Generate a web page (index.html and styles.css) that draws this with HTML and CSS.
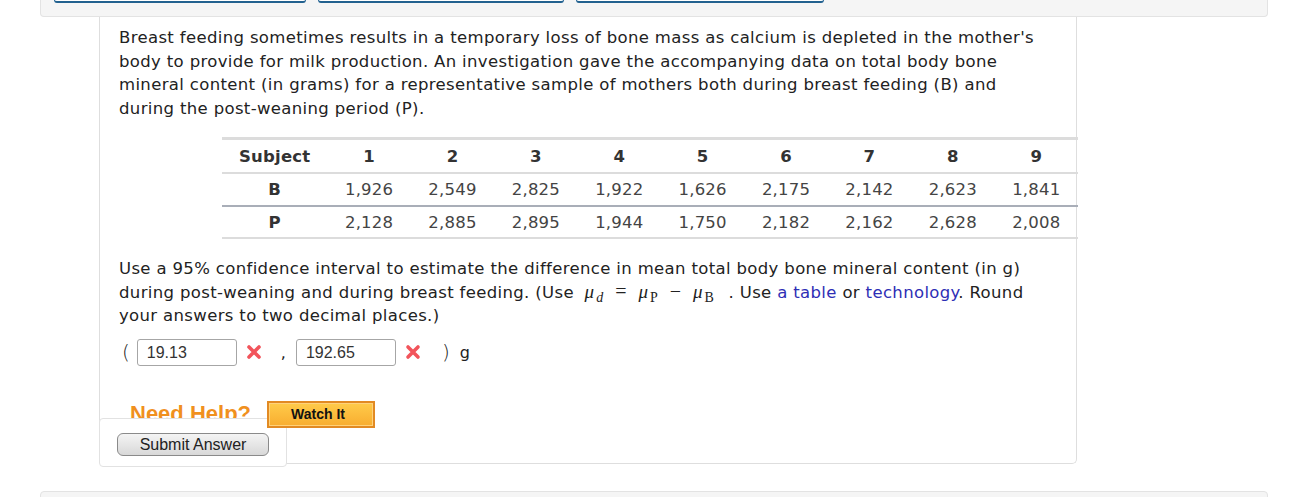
FILE: index.html
```html
<!DOCTYPE html>
<html>
<head>
<meta charset="utf-8">
<link rel="stylesheet" href="styles.css">
</head>
<body>
<div class="toppanel">
  <span class="tab t1"></span>
  <span class="tab t2"></span>
  <span class="tab t3"></span>
</div>
<div class="card">
  <p class="para p1">Breast feeding sometimes results in a temporary loss of bone mass as calcium is depleted in the mother's body to provide for milk production. An investigation gave the accompanying data on total body bone mineral content (in grams) for a representative sample of mothers both during breast feeding (B) and during the post-weaning period (P).</p>
  <table class="data">
    <tr class="head"><th class="first">Subject</th><th>1</th><th>2</th><th>3</th><th>4</th><th>5</th><th>6</th><th>7</th><th>8</th><th>9</th></tr>
    <tr class="rowb"><th class="first">B</th><td>1,926</td><td>2,549</td><td>2,825</td><td>1,922</td><td>1,626</td><td>2,175</td><td>2,142</td><td>2,623</td><td>1,841</td></tr>
    <tr class="rowp"><th class="first">P</th><td>2,128</td><td>2,885</td><td>2,895</td><td>1,944</td><td>1,750</td><td>2,182</td><td>2,162</td><td>2,628</td><td>2,008</td></tr>
  </table>
  <p class="para p2">Use a 95% confidence interval to estimate the difference in mean total body bone mineral content (in g) during post-weaning and during breast feeding. (Use <span class="math"><i>μ</i><sub><i>d</i></sub><span class="op">=</span><i>μ</i><sub>P</sub><span class="op">−</span><i>μ</i><sub>B</sub></span> . Use <a href="#" class="lnk">a table</a> or <a href="#" class="lnk">technology</a>. Round your answers to two decimal places.)</p>
  <div class="answer">
    <span class="paren">(</span>
    <span class="inp i1">19.13</span>
    <svg class="xmark" viewBox="0 0 16 16" width="16" height="16"><path d="M3 3 L13 13 M13 3 L3 13" stroke="#f2545b" stroke-width="3.6" stroke-linecap="round"/></svg>
    <span class="comma">,</span>
    <span class="inp i2">192.65</span>
    <svg class="xmark" viewBox="0 0 16 16" width="16" height="16"><path d="M3 3 L13 13 M13 3 L3 13" stroke="#f2545b" stroke-width="3.6" stroke-linecap="round"/></svg>
    <span class="paren close">)</span>
    <span class="unit">g</span>
  </div>
  <div class="help">
    <span class="needhelp">Need Help?</span>
    <span class="watch">Watch It</span>
  </div>
  <div class="popup">
    <span class="submit">Submit Answer</span>
  </div>
</div>
<div class="bottompanel"></div>
</body>
</html>
```
FILE: styles.css
```css
html, body {
  margin: 0;
  padding: 0;
  background: #fff;
}
body {
  font-family: "DejaVu Sans", Verdana, sans-serif;
  color: #222;
  width: 1290px;
  height: 497px;
  overflow: hidden;
}
.toppanel {
  margin-left: 40px;
  width: 1213px;
  height: 16px;
  background: #f5f5f5;
  border: 1px solid #e3e3e3;
  border-top: none;
  border-radius: 0 0 4px 4px;
  display: flex;
  align-items: flex-start;
  gap: 12px;
  padding-left: 13px;
  box-sizing: content-box;
  position: relative;
  z-index: 2;
}
.tab {
  display: block;
  height: 1px;
  background: #fff;
  border: 1px solid #2b6a9a;
  border-top: none;
  border-bottom: 2px solid #22618f;
  border-radius: 0 0 4px 4px;
}
.t1 { width: 250px; }
.t2 { width: 244px; }
.t3 { width: 246px; }
.card {
  position: relative;
  margin-left: 99px;
  width: 978px;
  height: 447px;
  border: 1px solid #dedede;
  border-top: none;
  border-radius: 0 0 5px 5px;
  padding: 9px 19px 0 19px;
  box-sizing: border-box;
}
.para {
  margin: 0;
  font-size: 16.5px;
  letter-spacing: 0.35px;
  line-height: 23.5px;
  width: 935px;
}
.data {
  margin: 17px -19px 0 103px;
  width: 856px;
  border-collapse: collapse;
  font-size: 16.5px;
  letter-spacing: 0.2px;
  color: #444;
}
.data th, .data td {
  text-align: center;
  padding: 0;
  width: 84px;
}
.data tr.head th { height: 32px; }
.data tr.rowb th, .data tr.rowb td { height: 31px; }
.data tr.rowp th, .data tr.rowp td { height: 30px; }
.data th { color: #333; font-weight: bold; }
.data .first { width: 106px; }
.data tr.head th {
  border-top: 3px solid #dcdcdc;
  border-bottom: 2px solid #dcdcdc;
}
.data tr.rowb th, .data tr.rowb td {
  border-bottom: 2px solid #a9aeb8;
  font-weight: normal;
}
.data tr.rowb th.first, .data tr.rowp th.first { font-weight: bold; color: #333; }
.data tr.rowp th, .data tr.rowp td {
  border-bottom: 2px solid #dcdcdc;
}
.p2 { margin-top: 18px; }
.math {
  display: inline-block;
  font-family: "Liberation Serif", "DejaVu Serif", serif;
  font-size: 19px;
  line-height: 18px;
  letter-spacing: 0;
  margin-left: 5px;
  margin-right: 9px;
}
.math i { font-style: italic; }
.math sub { font-size: 14px; vertical-align: -4px; line-height: 0; margin-left: 2px; }
.math sub i { font-style: italic; }
.math .op { margin: 0 12px; font-size: 20px; }
.lnk { color: #2e2eb5; text-decoration: none; }
.answer {
  display: flex;
  align-items: center;
  height: 27px;
  margin-top: 11px;
  font-size: 16px;
}
.paren {
  font-size: 20px;
  margin-left: 3px;
  font-weight: 300;
}
.inp {
  display: block;
  box-sizing: border-box;
  width: 100px;
  height: 27px;
  border: 1px solid #a6a6a6;
  border-radius: 3px;
  padding: 0 0 0 9px;
  font-family: "Liberation Sans", Arial, sans-serif;
  font-size: 16px;
  line-height: 25px;
  color: #333;
}
.i1 { margin-left: 7px; }
.xmark { margin-left: 9px; display: block; }
.comma { margin-left: 19px; margin-right: 10px; }
.close { margin-left: 21px; }
.unit { margin-left: 10px; }
.help {
  display: flex;
  align-items: flex-start;
  margin-top: 35px;
  margin-left: 11px;
}
.needhelp {
  font-family: "Liberation Sans", Arial, sans-serif;
  font-weight: bold;
  font-size: 22px;
  color: #f0901e;
  line-height: 24px;
  margin-top: 1px;
}
.watch {
  position: relative;
  z-index: 3;
  margin-left: 16px;
  box-sizing: border-box;
  width: 108px;
  height: 27px;
  border: 2px solid #e28a23;
  box-shadow: inset 0 0 0 1px #ffd27a;
  background: linear-gradient(#ffcb4a, #f8ad30);
  font-family: "Liberation Sans", Arial, sans-serif;
  font-weight: bold;
  font-size: 14px;
  color: #111;
  padding-left: 22px;
  line-height: 23px;
}
.popup {
  position: absolute;
  left: -1px;
  top: 401px;
  width: 188px;
  height: 49px;
  box-sizing: border-box;
  background: #fff;
  border: 1px solid #e2e2e2;
  border-radius: 4px;
  padding: 14px 0 0 17px;
  z-index: 2;
}
.submit {
  display: block;
  box-sizing: border-box;
  width: 152px;
  height: 23px;
  border: 1px solid #8a8a8a;
  border-radius: 6px;
  background: linear-gradient(#f4f4f4, #d8d8d8);
  font-family: "Liberation Sans", Arial, sans-serif;
  font-size: 16px;
  color: #222;
  text-align: center;
  line-height: 21px;
}
.bottompanel {
  margin-top: 27px;
  margin-left: 40px;
  width: 1226px;
  height: 20px;
  background: #f5f5f5;
  border: 1px solid #e3e3e3;
  border-radius: 4px 4px 0 0;
}
```
